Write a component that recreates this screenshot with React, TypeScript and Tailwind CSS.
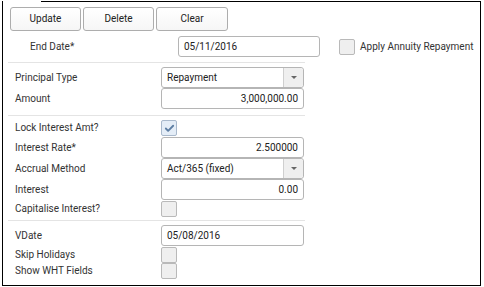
import { Check } from 'lucide-react';

function TextBox({ value, right, className }: { value: string; right?: boolean; className?: string }) {
  return (
    <div
      className={`h-[21px] border border-[#b5b5b5] rounded-[3px] bg-white flex items-center px-[5px] text-[#222] ${
        right ? 'justify-end' : ''
      } ${className ?? ''}`}
    >
      {value}
    </div>
  );
}

function SelectBox({ value }: { value: string }) {
  return (
    <div className="h-[21px] w-[143px] border border-[#b5b5b5] rounded-[3px] bg-white flex items-stretch text-[#222]">
      <div className="flex-1 flex items-center px-[5px]">{value}</div>
      <div className="w-[20px] border-l border-[#cfcfcf] bg-[#efefef] rounded-r-[3px] flex items-center justify-center">
        <div className="w-0 h-0 border-l-[3px] border-r-[3px] border-t-[3px] border-l-transparent border-r-transparent border-t-[#666]" />
      </div>
    </div>
  );
}

function Box({ checked }: { checked?: boolean }) {
  return (
    <div
      className={`w-[16px] h-[16px] rounded-[2px] border flex items-center justify-center ${
        checked ? 'border-[#a9b9cc] bg-[#e4edf7]' : 'border-[#b9b9b9] bg-[#efefef]'
      }`}
    >
      {checked && <Check size={11} strokeWidth={4} className="text-[#5d7ea3]" />}
    </div>
  );
}

function Row({ label, children, h = 'h-[21px]' }: { label: string; children: React.ReactNode; h?: string }) {
  return (
    <div className={`flex items-center ${h}`}>
      <div className="w-[158px] pl-[12px] shrink-0">{label}</div>
      {children}
    </div>
  );
}

function Divider() {
  return <div className="ml-[5px] w-[297px] h-px bg-[#e4e4e4]" />;
}

export default function App() {
  return (
    <div className="w-[484px] h-[287px] bg-white text-[10px] leading-none text-[#333] font-['Roboto',sans-serif]">
      <div className="ml-[2px] w-[479px] h-[285px] border-x border-b border-black">
        {/* top edge */}
        <div className="mt-px ml-[38px] h-px bg-black" />

        {/* actions */}
        <div className="mt-[5px] ml-[7px] flex gap-[2px] text-[#222]">
          {['Update', 'Delete', 'Clear'].map((b, i) => (
            <button
              key={b}
              className={`h-[24px] ${i === 2 ? 'w-[72px]' : 'w-[71px]'} border border-[#adadad] rounded-[3px] bg-gradient-to-b from-white to-[#f6f6f6]`}
            >
              {b}
            </button>
          ))}
        </div>

        <div className="mt-[5px] flex items-center h-[21px]">
          <div className="w-[175px] pl-[27px] shrink-0">End Date*</div>
          <TextBox value="05/11/2016" className="w-[142px]" />
          <div className="ml-[19px]">
            <Box />
          </div>
          <div className="ml-[5px] whitespace-nowrap">Apply Annuity Repayment</div>
        </div>

        <div className="mt-[5px]">
          <Divider />
        </div>

        <div className="mt-[4px]">
          <Row label="Principal Type">
            <SelectBox value="Repayment" />
          </Row>
          <Row label="Amount">
            <TextBox value="3,000,000.00" right className="w-[143px]" />
          </Row>
        </div>

        <div className="mt-[6px]">
          <Divider />
        </div>

        <div className="mt-[3px]">
          <Row label="Lock Interest Amt?" h="h-[18px]">
            <Box checked />
          </Row>
          <Row label="Interest Rate*">
            <TextBox value="2.500000" right className="w-[143px]" />
          </Row>
          <Row label="Accrual Method">
            <SelectBox value="Act/365 (fixed)" />
          </Row>
          <Row label="Interest">
            <TextBox value="0.00" right className="w-[143px]" />
          </Row>
          <Row label="Capitalise Interest?" h="h-[17px]">
            <Box />
          </Row>
        </div>

        <div className="mt-[3px]">
          <Divider />
        </div>

        <div className="mt-[4px]">
          <Row label="VDate">
            <TextBox value="05/08/2016" className="w-[143px]" />
          </Row>
          <Row label="Skip Holidays" h="h-[17px]">
            <Box />
          </Row>
          <Row label="Show WHT Fields" h="h-[16px]">
            <Box />
          </Row>
        </div>
      </div>
    </div>
  );
}
